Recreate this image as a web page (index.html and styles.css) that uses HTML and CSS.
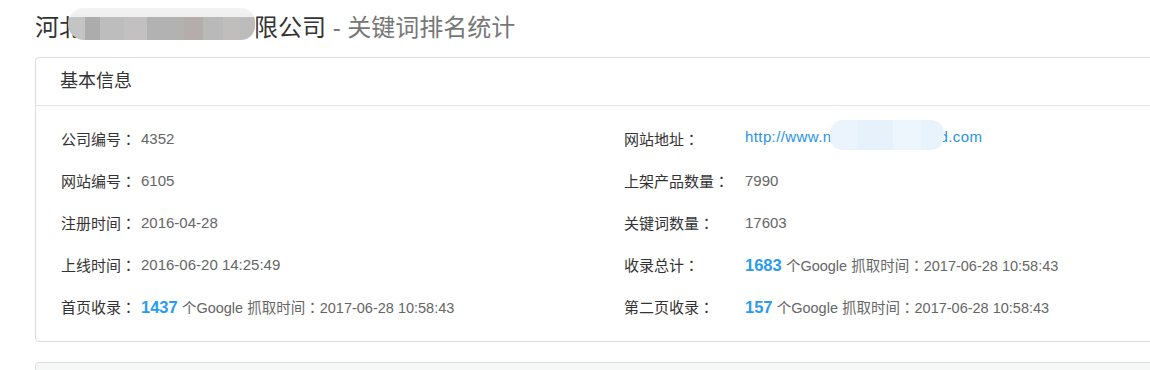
FILE: index.html
```html
<!DOCTYPE html>
<html lang="zh-CN">
<head>
    <meta charset="UTF-8">
    <title>关键词排名统计</title>
    <link rel="stylesheet" href="styles.css">
</head>
<body>
    <div class="page">
        <!-- Page title -->
        <h1 class="page-title">河北<span class="mask mask-title"></span>限公司 <small>- 关键词排名统计</small></h1>

        <!-- Basic info panel -->
        <div class="panel">
            <div class="panel-heading">基本信息</div>
            <div class="panel-body">
                <div class="info-col info-left">
                    <div class="info-row"><span class="label">公司编号<i class="colon">：</i></span><span class="value">4352</span></div>
                    <div class="info-row"><span class="label">网站编号<i class="colon">：</i></span><span class="value">6105</span></div>
                    <div class="info-row"><span class="label">注册时间<i class="colon">：</i></span><span class="value">2016-04-28</span></div>
                    <div class="info-row"><span class="label">上线时间<i class="colon">：</i></span><span class="value">2016-06-20 14:25:49</span></div>
                    <div class="info-row"><span class="label">首页收录<i class="colon">：</i></span><span class="value"><b class="count">1437</b> <span class="meta">个Google 抓取时间<i class="colon">：</i>2017-06-28 10:58:43</span></span></div>
                </div>
                <div class="info-col info-right">
                    <div class="info-row"><span class="label">网站地址<i class="colon">：</i></span><span class="value"><a class="site-link" href="#">http://www.n<span class="mask mask-link"></span>d.com</a></span></div>
                    <div class="info-row"><span class="label">上架产品数量<i class="colon">：</i></span><span class="value">7990</span></div>
                    <div class="info-row"><span class="label">关键词数量<i class="colon">：</i></span><span class="value">17603</span></div>
                    <div class="info-row"><span class="label">收录总计<i class="colon">：</i></span><span class="value"><b class="count">1683</b> <span class="meta">个Google 抓取时间<i class="colon">：</i>2017-06-28 10:58:43</span></span></div>
                    <div class="info-row"><span class="label">第二页收录<i class="colon">：</i></span><span class="value"><b class="count">157</b> <span class="meta">个Google 抓取时间<i class="colon">：</i>2017-06-28 10:58:43</span></span></div>
                </div>
            </div>
        </div>

        <!-- Next panel (cut off) -->
        <div class="panel panel-next">
            <div class="panel-heading"></div>
        </div>
    </div>
</body>
</html>
```

FILE: styles.css
```css
html, body {
    overflow: hidden;
}

body {
    margin: 0;
    font-family: "Liberation Sans", "Noto Sans CJK SC", sans-serif;
    color: #333;
    background: #fff;
}

.page {
    padding: 12px 0 0 35px;
    width: 1178px;
}

.page-title {
    margin: 0 0 13px;
    font-size: 24px;
    line-height: 32px;
    font-weight: normal;
    color: #333;
    white-space: nowrap;
}

.page-title small {
    font-size: 24px;
    color: #777;
}

.mask {
    display: inline-block;
    vertical-align: top;
}

.mask-title {
    width: 187px;
    height: 32px;
    margin-left: -15px;
    margin-right: -1px;
    transform: translateY(-4px);
    border-radius: 16px 14px 14px 16px;
    background:
        linear-gradient(to bottom, #f3f3f3 0, #eeeeee 28%, rgba(255,255,255,0) 29%),
        linear-gradient(to right, #c4c4c4 0, #c4c4c4 9%, #acacac 9%, #acacac 17%, #bdbdbd 17%, #bdbdbd 30%, #c2c0c0 30%, #c2c0c0 42%, #b2b2b2 42%, #b2b2b2 62%, #b5adab 62%, #b5adab 72%, #b9b9b9 72%, #b9b9b9 83%, #c0bebc 83%, #c0bebc 92%, #bcbcbc 92%);
    filter: blur(0.6px);
}

/* full-width colon centred in its cell, as in the original font */
.colon {
    font-style: normal;
    font-family: "Noto Sans CJK JP", sans-serif;
    font-feature-settings: "locl" 0;
}

.panel {
    border: 1px solid #dddddd;
    border-radius: 4px;
    background: #fff;
    margin-bottom: 20px;
}

.panel-heading {
    height: 47px;
    line-height: 47px;
    padding: 0 24px;
    font-size: 18px;
    color: #333;
    border-bottom: 1px solid #e3e3e3;
}

.panel-body {
    display: grid;
    grid-template-columns: 563px 1fr;
    padding: 11px 25px 14px;
}

.info-row {
    display: flex;
    align-items: center;
    height: 42px;
    font-size: 15px;
    white-space: nowrap;
}

.label {
    color: #333;
}

.info-left .label {
    width: 80px;
}

.info-right .label {
    width: 121px;
}

.value {
    color: #666;
}

.count {
    font-size: 16.5px;
    font-weight: bold;
    color: #2b9bf0;
}

.meta {
    font-size: 14.5px;
    color: #666;
}

.site-link {
    color: #2a92e8;
    text-decoration: none;
    font-size: 15px;
    letter-spacing: 0.4px;
}

.mask-link {
    width: 114px;
    height: 30px;
    margin: -6px -4px 0 -2px;
    vertical-align: middle;
    border-radius: 13px;
    background:
        linear-gradient(to right, #ebf4fc 0, #ebf4fc 25%, #e6f1fb 25%, #e6f1fb 55%, #eef6fd 55%, #eef6fd 80%, #e9f3fc 80%);
    filter: blur(0.5px);
}

.panel-next .panel-heading {
    background: #f6f7f7;
    border-bottom: none;
    border-radius: 4px 4px 0 0;
}
```
